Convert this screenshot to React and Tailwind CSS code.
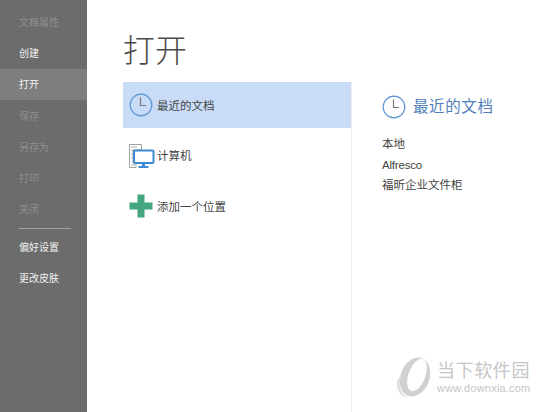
const font = { fontFamily: '"Liberation Sans","Noto Sans CJK SC",sans-serif' };

function Clock({ size = 24 }) {
  return (
    <svg width={size} height={size} viewBox="0 0 24 24" fill="none" className="shrink-0">
      <circle cx="12" cy="12" r="10.8" stroke="#5b93d3" strokeWidth="1.2" />
      <path d="M11.5 4.5V12.5H17" stroke="#777777" strokeWidth="1.2" />
    </svg>
  );
}

function Computer() {
  return (
    <svg width="26" height="24" viewBox="0 0 26 24" fill="none" className="shrink-0 -mr-[2px]">
      <path d="M0.5 0.5H12.500V6H4V19H7V23.500H0.5Z" fill="#ffffff" stroke="#8a8a8a" strokeWidth="0.8" />
      <path d="M2 3H8M2 6.5H3.5M2 10H3.5M2 13.500H3.500M2 21H6" stroke="#9a9a9a" strokeWidth="0.8" />
      <rect x="5" y="6.500" width="19.500" height="12.500" rx="1" fill="#ffffff" stroke="#3f88d6" strokeWidth="2" />
      <path d="M13 20H16V22H19.500V24H9.500V22H13Z" fill="#3f88d6" />
    </svg>
  );
}

function Plus() {
  return (
    <svg width="24" height="24" viewBox="0 0 24 24" className="shrink-0">
      <path d="M8.500 0.500H15.500V8.500H23.500V15.500H15.500V23.500H8.500V15.500H0.500V8.500H8.500Z" fill="#44a67f" />
    </svg>
  );
}

function Side({ children, tone, active }) {
  const cls = tone === "on" ? "text-[#f2f2f2]" : "text-[#8f8f8f]";
  return (
    <div className={`h-[31.3px] pl-[19px] flex items-center text-[10px] ${cls} ${active ? "bg-[#7e7e7e]" : ""}`}>
      {children}
    </div>
  );
}

function Place({ icon, label, active }) {
  return (
    <div className={`h-[46px] pl-[6px] pr-2 mb-[4.500px] flex items-center gap-[4px] text-[11.500px] text-[#444444] ${active ? "bg-[#c9dcf7]" : ""}`}>
      {icon}
      <span className="pt-[3px]">{label}</span>
    </div>
  );
}

export default function App() {
  return (
    <div className="relative w-[550px] h-[412px] overflow-hidden bg-white flex" style={font}>
      <aside className="w-[87px] shrink-0 bg-[#6c6c6c] pt-[6.500px]">
        <Side>文档属性</Side>
        <Side tone="on">创建</Side>
        <Side tone="on" active>打开</Side>
        <Side>保存</Side>
        <Side>另存为</Side>
        <Side>打印</Side>
        <Side>关闭</Side>
        <div className="h-px w-[52px] ml-[19px] mt-[2px] mb-[3px] bg-[#a0a0a0]" />
        <Side tone="on">偏好设置</Side>
        <Side tone="on">更改皮肤</Side>
      </aside>

      <main className="flex-1 flex flex-col pl-[36px]">
        <h1 className="h-[82px] pt-[29px] text-[32px] leading-[44px] font-light text-[#4a4a4a]">打开</h1>
        <div className="flex flex-1">
          <div className="w-[229px] border-r border-[#eeeeee]">
            <Place active icon={<Clock />} label="最近的文档" />
            <Place icon={<Computer />} label="计算机" />
            <Place icon={<Plus />} label="添加一个位置" />
          </div>
          <div className="pl-[30px] pt-[13px]">
            <div className="flex items-center gap-[7px] h-[24px]">
              <Clock />
              <span className="text-[15.500px] tracking-[0.6px] text-[#4f7fb8]">最近的文档</span>
            </div>
            <div className="mt-[15px] flex flex-col gap-[0.5px] text-[11.500px] leading-[20px] text-[#444444]">
              <span>本地</span>
              <span className="tracking-[-0.2px]">Alfresco</span>
              <span>福昕企业文件柜</span>
            </div>
          </div>
        </div>
      </main>

      <div className="absolute left-[397px] top-[357px] flex items-center gap-[5px]">
        <svg width="35" height="41" viewBox="0 0 35 41" className="shrink-0">
          <ellipse cx="18" cy="20" rx="14.500" ry="20" transform="rotate(20 18 20)" fill="#d0d0d0" />
          <path d="M0 27C0 35 6 41 13 41C8 40 4 36 3 30C2 25 4 20 5 18C2 20 0 23 0 27Z" fill="#dcdcdc" />
          <ellipse cx="20" cy="18" rx="8.500" ry="17" transform="rotate(20 20 18)" fill="#ffffff" />
        </svg>
        <div className="flex flex-col">
          <span className="text-[18px] leading-[22px] tracking-[0.6px] text-[#c6c6c6]">当下软件园</span>
          <span className="text-[11px] leading-[13px] tracking-[0.2px] text-[#c6c6c6]">www.downxia.com</span>
        </div>
      </div>
    </div>
  );
}
